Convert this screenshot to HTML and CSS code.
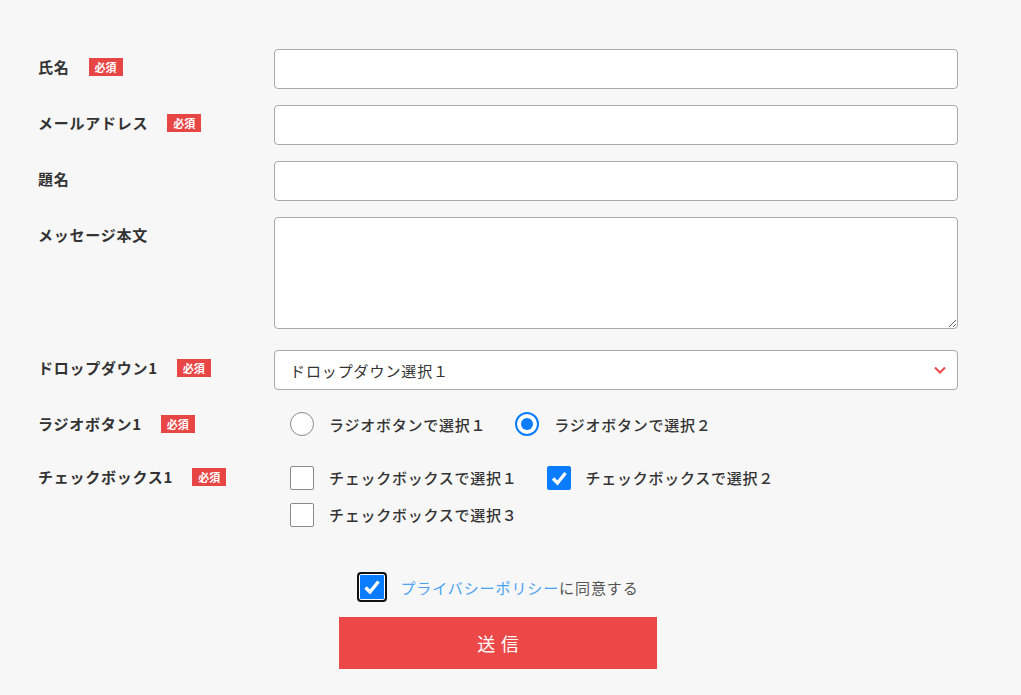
FILE: index.html
```html
<!DOCTYPE html>
<html lang="ja">
<head>
<meta charset="utf-8">
<link rel="stylesheet" href="styles.css">
</head>
<body>
<form class="form">
  <div class="row">
    <div class="label">氏名<span class="req">必須</span></div>
    <div class="field"><input class="input" type="text"></div>
  </div>
  <div class="row">
    <div class="label">メールアドレス<span class="req">必須</span></div>
    <div class="field"><input class="input" type="text"></div>
  </div>
  <div class="row">
    <div class="label">題名</div>
    <div class="field"><input class="input" type="text"></div>
  </div>
  <div class="row row-text">
    <div class="label">メッセージ本文</div>
    <div class="field"><textarea class="textarea"></textarea></div>
  </div>
  <div class="row row-select">
    <div class="label">ドロップダウン1<span class="req">必須</span></div>
    <div class="field">
      <div class="select">
        <span>ドロップダウン選択１</span>
        <svg class="chev" width="14" height="10" viewBox="0 0 14 10"><path d="M2 2.5 L7 7.5 L12 2.5" fill="none" stroke="#e84a4a" stroke-width="2"/></svg>
      </div>
    </div>
  </div>
  <div class="row row-radio">
    <div class="label">ラジオボタン1<span class="req">必須</span></div>
    <div class="field opts">
      <label class="opt"><span class="radio"></span>ラジオボタンで選択１</label>
      <label class="opt"><span class="radio on"></span>ラジオボタンで選択２</label>
    </div>
  </div>
  <div class="row row-check">
    <div class="label">チェックボックス1<span class="req">必須</span></div>
    <div class="field">
      <div class="opts opts-line">
        <label class="opt"><span class="box"></span>チェックボックスで選択１</label>
        <label class="opt"><span class="box on"><svg width="24" height="24" viewBox="0 0 24 24"><path d="M6 12.5 L10.5 17 L18.5 7" fill="none" stroke="#fff" stroke-width="3.2"/></svg></span>チェックボックスで選択２</label>
      </div>
      <div class="opts opts-line">
        <label class="opt"><span class="box"></span>チェックボックスで選択３</label>
      </div>
    </div>
  </div>
  <div class="bottom">
    <div class="agree">
      <span class="abox"><svg width="24" height="24" viewBox="0 0 24 24"><path d="M5.5 12.5 L10 17 L18.5 6.5" fill="none" stroke="#fff" stroke-width="3.4"/></svg></span>
      <span class="agree-text"><a class="link">プライバシーポリシー</a>に同意する</span>
    </div>
    <button class="submit" type="button">送信</button>
  </div>
</form>
</body>
</html>
```
FILE: styles.css
```css
html, body {
  margin: 0;
  padding: 0;
  background: #f7f7f7;
}
body {
  font-family: "Noto Sans CJK JP", "Noto Sans", sans-serif;
  color: #333;
}
.form {
  padding: 49px 0 0 38px;
  width: 920px;
}
.row {
  display: grid;
  grid-template-columns: 236px 684px;
  margin-bottom: 16px;
}
.row-text { margin-bottom: 21px; }
.row-select { margin-bottom: 14px; }
.label {
  font-size: 15px;
  font-weight: 700;
  letter-spacing: 0.05em;
  line-height: 20px;
  padding-top: 8px;
  display: flex;
  align-items: center;
  align-self: start;
  height: 20px;
}
.req {
  display: inline-block;
  margin-left: 19px;
  background: #e84545;
  color: #fff;
  font-size: 11px;
  font-weight: 700;
  line-height: 18px;
  height: 18px;
  padding: 0 6px;
  letter-spacing: 0;
}
.input, .textarea, .select {
  box-sizing: border-box;
  width: 684px;
  background: #fff;
  border: 1px solid #a8a8a8;
  border-radius: 4px;
  display: block;
  margin: 0;
  font: inherit;
}
.input { height: 40px; }
.textarea { height: 112px; resize: vertical; }
.select {
  height: 40px;
  display: flex;
  align-items: center;
  justify-content: space-between;
  padding: 0 10px 0 15px;
  font-size: 15px;
  letter-spacing: 0.06em;
  color: #333;
}
.chev { display: block; }
.row-radio { margin-bottom: 15px; }
.row-radio .label { padding-top: 10px; }
.opts {
  display: flex;
  align-items: center;
  gap: 29px;
  padding-left: 16px;
}
.row-radio .opts { height: 40px; }
.opts-line { height: 37px; }
.row-check .label { padding-top: 8px; }
.opt {
  display: flex;
  align-items: center;
  gap: 15px;
  font-size: 15px;
  font-weight: 500;
  letter-spacing: 0.05em;
  color: #333;
}
.radio {
  box-sizing: border-box;
  width: 24px;
  height: 24px;
  border-radius: 50%;
  border: 1px solid #8a8a8a;
  background: #fff;
  position: relative;
}
.radio.on {
  border: 2px solid #0a7cff;
}
.radio.on::after {
  content: "";
  position: absolute;
  left: 4px;
  top: 4px;
  width: 12px;
  height: 12px;
  border-radius: 50%;
  background: #0a7cff;
}
.box {
  box-sizing: border-box;
  width: 24px;
  height: 24px;
  border: 1px solid #8a8a8a;
  border-radius: 2px;
  background: #fff;
  display: flex;
}
.box.on {
  background: #0a7cff;
  border-color: #0a7cff;
}
.box svg { display: block; margin: -1px; }
.row-check { margin-bottom: 39px; }
.bottom {
  margin-left: 301px;
  width: 318px;
}
.agree {
  display: flex;
  align-items: center;
  justify-content: center;
  gap: 13px;
  height: 30px;
}
.abox {
  box-sizing: border-box;
  width: 30px;
  height: 30px;
  border: 2px solid #111;
  border-radius: 4px;
  background: #0a7cff;
  display: flex;
  align-items: center;
  justify-content: center;
  box-shadow: inset 0 0 0 1px #fff;
}
.agree-text {
  font-size: 15px;
  letter-spacing: 0.06em;
  color: #555;
  white-space: nowrap;
}
.link { color: #4aa3f5; }
.submit {
  margin-top: 15px;
  width: 318px;
  height: 52px;
  background: #ed4848;
  border: none;
  color: #fff;
  font-family: inherit;
  font-size: 18px;
  letter-spacing: 0.3em;
  padding: 0 0 0 0.3em;
  display: block;
}
```
